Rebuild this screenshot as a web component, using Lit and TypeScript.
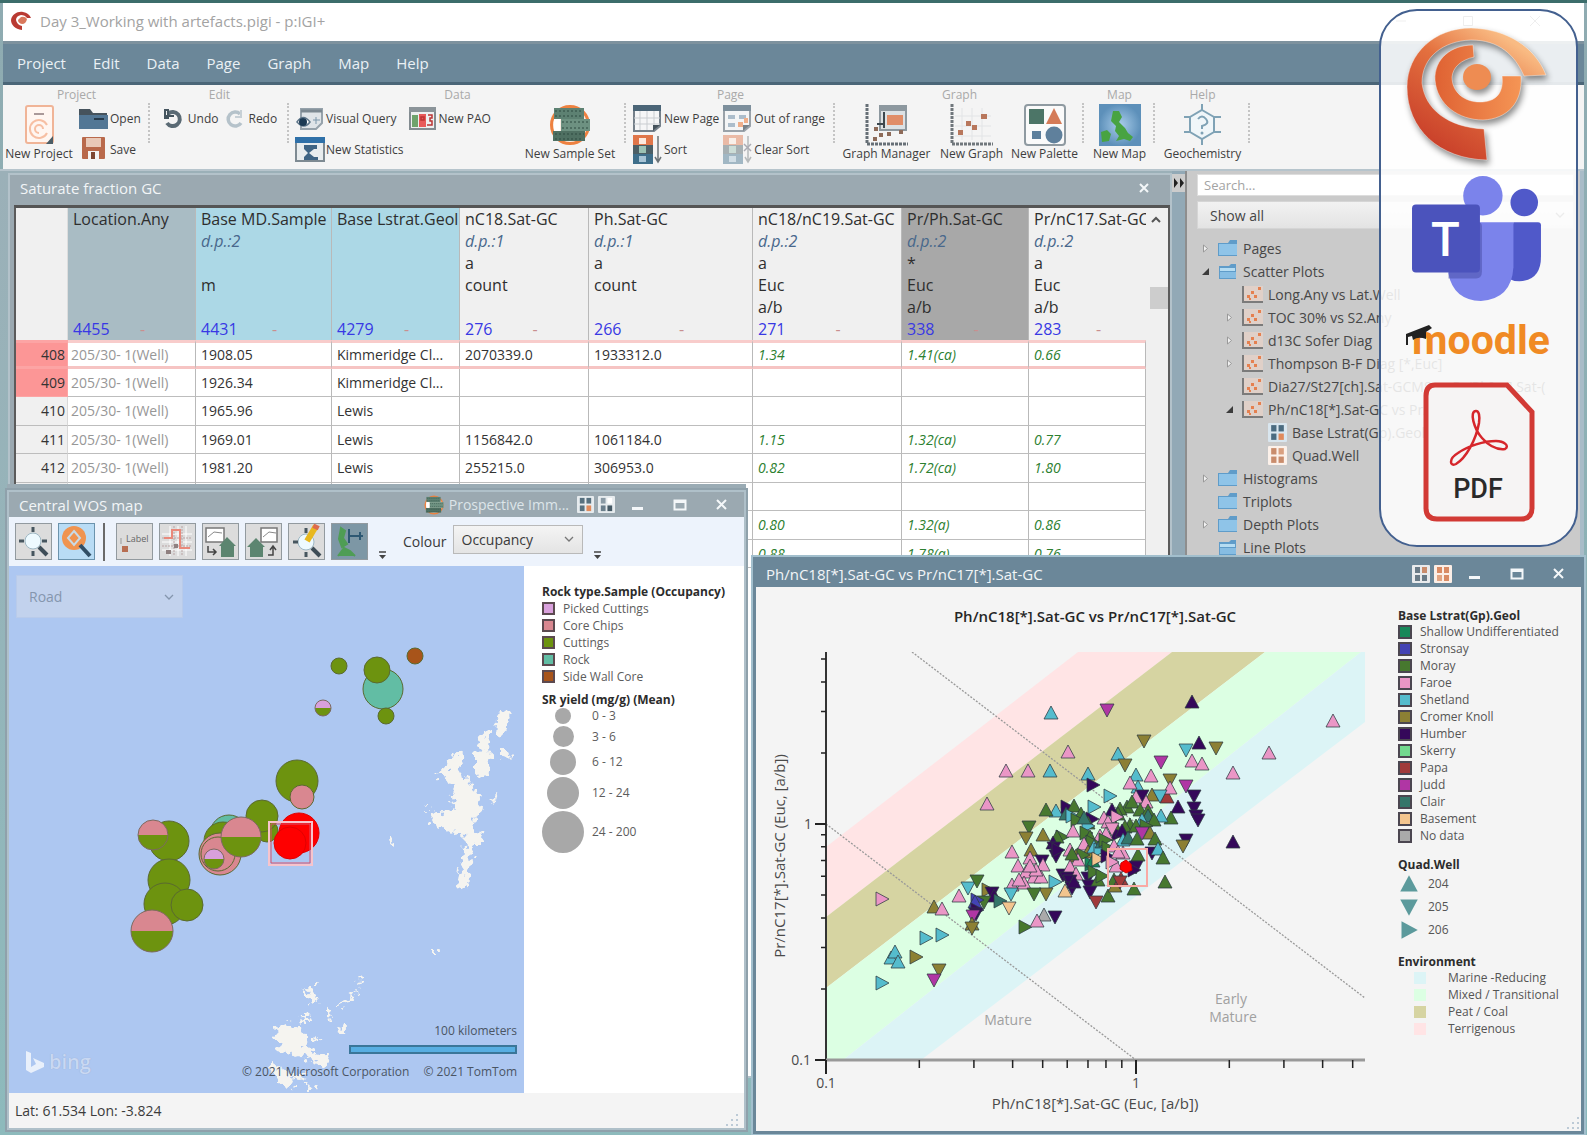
import { LitElement, html, svg, css, nothing } from "lit";
import { customElement, property } from "lit/decorators.js";
import { classMap } from "lit/directives/class-map.js";
import { styleMap } from "lit/directives/style-map.js";

/* ---------- shared styles ---------- */

const base = css`
  *, *::before, *::after { box-sizing: border-box; }
  button, select, input {
    font: inherit; color: inherit; margin: 0; padding: 0;
    border: 0; background: none; border-radius: 0; appearance: none; outline: 0;
  }
  svg { display: block; flex: none; }
  h1, h2, h3, ul { margin: 0; padding: 0; font: inherit; list-style: none; }
  .picker { display: grid; align-items: center; }
  .picker > * { grid-area: 1 / 1; }
  .picker > svg { justify-self: end; margin-right: 8px; pointer-events: none; }
  .picker select { width: 100%; height: 100%; }
`;

const frame = css`
  .caption {
    display: flex; align-items: center; gap: 4px; flex: none;
    height: 25px; padding: 0 3px 0 10px; background: #9ba9b1; color: #f2f5f7;
    font-size: 15px; line-height: 20px;
  }
  .caption h2 { flex: 1; white-space: nowrap; }
  .caption .win { width: 38px; height: 20px; display: grid; place-items: center; }
`;

/* ---------- icons ---------- */

const chevron = (c = "#777") => html`<svg width="10" height="6" viewBox="0 0 10 6"><path d="M1 1l4 4 4-4" fill="none" stroke=${c} stroke-width="1.3"/></svg>`;
const minIcon = html`<svg width="14" height="14"><rect x="1" y="9" width="11" height="3" fill="#f4f7f9"/></svg>`;
const maxIcon = html`<svg width="14" height="14"><path d="M1.500 2.500h11v9h-11zM1 4h12" fill="none" stroke="#f4f7f9" stroke-width="2"/></svg>`;
const closeIcon = html`<svg width="14" height="14"><path d="M2 2l9 9M11 2l-9 9" stroke="#f4f7f9" stroke-width="2"/></svg>`;

const quad = (a: string, b: string, c: string, d: string, bg = "#e6ebee", size = 17) => html`
  <svg width=${size} height=${size} viewBox="0 0 18 18"><rect width="18" height="18" rx="1" fill=${bg}/>
  <rect x="3" y="2" width="5" height="6" fill=${a}/><rect x="10" y="2" width="5" height="6" fill=${b}/>
  <rect x="3" y="10" width="5" height="6" fill=${c}/><rect x="10" y="10" width="5" height="6" fill=${d}/></svg>`;

const sampleSet = (s: number) => html`
  <svg width=${s} height=${s} viewBox="0 0 42 42">
    <circle cx="21" cy="21" r="18.500" fill="#fbeee4" stroke="#ee8241" stroke-width="3"/>
    <rect x="5" y="4" width="30" height="11" fill="#5d8172"/><rect x="12" y="15" width="29" height="12" fill="#6d9181"/>
    <rect x="4" y="27" width="32" height="10" fill="#4f7062"/>
    <path d="M6 7h28M6 12h28M13 18h27M13 24h27M6 30h29M6 35h28" stroke="#2f4a40" stroke-dasharray="2 2"/>
    <rect x="5" y="15" width="6" height="12" fill="#fff"/>
  </svg>`;

const sortIcon = (faint = false) => html`
  <svg width="29" height="29" viewBox="0 0 29 29" opacity=${faint ? 0.45 : 1}>
    <rect x="0" width="20" height="10" fill="#e0764a"/><rect x="6" y="3" width="7" height="6" fill="#fde9dd"/>
    <rect y="10" width="20" height="9" fill="#4c5f66"/><rect x="6" y="11" width="7" height="7" fill="#9cc2b4"/>
    <rect y="19" width="20" height="10" fill="#3f6f8b"/><rect x="6" y="21" width="7" height="6" fill="#a7c4d6"/>
    <path d="M25 1v25M22 22l3 5 3-5" fill="none" stroke="#6c7478" stroke-width="1.500"/>
    ${faint ? svg`<path d="M21 9l7 7M28 9l-7 7" stroke="#556" stroke-width="1.500"/>` : nothing}
  </svg>`;

const pageIcon = (dots = false) => html`
  <svg width="29" height="27" viewBox="0 0 29 27" opacity=${dots ? 0.7 : 1}>
    <path d="M1 1h26v20l-6 5H1z" fill="#f5f6f7" stroke="#75808a" stroke-width="2"/><rect width="28" height="6" fill="#4b6577"/>
    ${dots
      ? svg`<path d="M5 10h7v4H5zM16 10h7v4h-7zM5 18h7v4H5z" fill="#8fa6bb"/><path d="M15 17h5v5h-5zM21 13h4v5h-4z" fill="#ee9360"/>`
      : svg`<path d="M7 6v19M14 6v19M21 6v19M1 13h26M1 19h26" stroke="#c9cdd1"/>`}
    <path d="M20 26v-6h7z" fill="#44525c"/>
  </svg>`;

const icons: Record<string, unknown> = {
  newProject: html`<svg width="29" height="40" viewBox="0 0 29 40"><rect x="1" y="1" width="27" height="37" rx="2" fill="#fff6f1" stroke="#f0b497" stroke-width="2"/><path d="M9 9h10" stroke="#a99" stroke-width="2"/><path d="M22 20a9 9 0 1 0 0 8M18 24a4 4 0 1 0-4 4" fill="none" stroke="#f7bfa3" stroke-width="2"/><path d="M28 39h-7l7-8z" fill="#4b5d66"/></svg>`,
  open: html`<svg width="29" height="20" viewBox="0 0 29 20"><path d="M0 0h11l3 4h14v4H0z" fill="#46535d"/><rect y="6" width="29" height="14" fill="#537795"/><rect x="15" y="9" width="10" height="2" fill="#26394a"/></svg>`,
  save: html`<svg width="23" height="24" viewBox="0 0 23 24"><rect width="23" height="22" rx="1" fill="#b9694b"/><rect x="4" y="1" width="15" height="9" fill="#e9c9b8"/><rect x="6" y="14" width="11" height="10" fill="#f4f4f4"/><rect x="9" y="15" width="4" height="7" fill="#7e4632"/></svg>`,
  undo: html`<svg width="19" height="20" viewBox="0 0 19 20"><path d="M4 5a7 7 0 1 1-1 9" fill="none" stroke="#5a6a74" stroke-width="4"/><path d="M1 1h3v8H1zM1 7h9" stroke="#44545e" stroke-width="2" fill="none"/></svg>`,
  redo: html`<svg width="19" height="20" viewBox="0 0 19 20"><path d="M15 5a7 7 0 1 0 1 9" fill="none" stroke="#b5c2ca" stroke-width="3.500"/><path d="M16 1v7h-6" stroke="#c7d0d6" stroke-width="2" fill="none"/></svg>`,
  query: html`<svg width="28" height="22" viewBox="0 0 28 22"><path d="M5 1h21v14l-6 6H5z" fill="#dfe4e8" stroke="#96a2ab" stroke-width="2"/><path d="M5 3h21" stroke="#7b8891" stroke-width="3"/><path d="M1 14q6-9 13 0q-6 8-13 0z" fill="#fff" stroke="#5c7488" stroke-width="1.500"/><circle cx="7" cy="14" r="4" fill="#1c3a54"/><path d="M20 9v7M17 12h7" stroke="#7c97ab"/></svg>`,
  pao: html`<svg width="27" height="23" viewBox="0 0 27 23"><rect x="1" y="1" width="25" height="21" fill="#eef0f0" stroke="#838c91" stroke-width="2"/><rect width="27" height="5" fill="#8b9499"/><rect x="3" y="8" width="6" height="12" fill="#6fa36c"/><rect x="10" y="7" width="7" height="13" fill="#e85a5a"/><path d="M12 10h3v3h-3zM19 8h4v3h-2v3h2v4h-5" fill="none" stroke="#b33" stroke-width="1.500"/></svg>`,
  stats: html`<svg width="30" height="25" viewBox="0 0 30 25"><rect x="1" y="1" width="28" height="23" fill="#e8ecee" stroke="#7e8a92" stroke-width="2"/><rect width="30" height="6" fill="#2f70a8"/><path d="M9 8h13v4h-3l-5 4 5 4h4v3H9v-3l4-4-4-4z" fill="#3f6484"/></svg>`,
  sampleSet: sampleSet(42),
  newPage: pageIcon(),
  outRange: pageIcon(true),
  sort: sortIcon(),
  clearSort: sortIcon(true),
  graphManager: html`<svg width="43" height="42" viewBox="0 0 43 42"><path d="M2 0v40h41" fill="none" stroke="#666f76" stroke-width="3" stroke-dasharray="3 1"/><rect x="15" y="2" width="26" height="24" fill="#dce1e4" stroke="#8d989f" stroke-width="2"/><rect x="15" y="2" width="26" height="5" fill="#8d989f"/><rect x="22" y="11" width="16" height="10" fill="#e08d68"/><path d="M19 8v16M12 20h8" stroke="#3c474e" stroke-width="2"/><path d="M9 23h4v4H9zM14 29h4v4h-4zM8 33h4v4H8zM22 28h4v4h-4zM34 26h4v4h-4z" fill="#8d6a58"/></svg>`,
  newGraph: html`<svg width="43" height="42" viewBox="0 0 43 42"><path d="M2 0v40h41" fill="none" stroke="#70777c" stroke-width="3" stroke-dasharray="3 1"/><path d="M12 4v32M22 4v32M32 4v32M5 12h36M5 22h36M5 32h36" stroke="#e2e4e6"/><path d="M16 17h5v5h-5zM22 21h5v5h-5zM31 10h6v5h-6zM8 26h5v5H8z" fill="#b8775c"/></svg>`,
  palette: html`<svg width="42" height="42" viewBox="0 0 42 42"><rect x="1" y="1" width="40" height="40" rx="3" fill="#fafafa" stroke="#8f9aa1" stroke-width="2"/><rect x="5" y="5" width="15" height="15" fill="#4c7567"/><path d="M30 4l8 16H22z" fill="#d47b58"/><path d="M8 27h9v8H8z" fill="#5d7f9c"/><circle cx="30" cy="31" r="8.500" fill="#5f809c"/></svg>`,
  newMap: html`<svg width="42" height="42" viewBox="0 0 42 42"><defs><radialGradient id="sea"><stop offset="0" stop-color="#a9cdea"/><stop offset="1" stop-color="#5d90ba"/></radialGradient></defs><rect width="42" height="42" fill="url(#sea)"/><path d="M14 7l6 0 3 6-3 5 6 6 3 5 5 4-3 4-6-2-8 2 3-5-4-5 1-5-5-5zM2 28l6-2 4 4-2 7-7 1z" fill="#48a342"/></svg>`,
  geochem: html`<svg width="39" height="42" viewBox="0 0 39 42"><g fill="none" stroke="#7fa2b5" stroke-width="2"><path d="M19 6l12 7v15l-12 7-12-7V13z" fill="#f0f6f9"/><path d="M19 0v6M19 35v6M7 13l-6 0M7 28H1M31 13h7M31 28h7"/><path d="M15 15q4-5 8 0t-4 7v3"/></g><circle cx="19" cy="29" r="1.500" fill="#7fa2b5"/></svg>`,
};

/* ---------- ribbon ---------- */

interface Tool { icon: string; label: string; }
interface Column { big?: boolean; tools: Tool[]; wide?: number; }
interface Group { name: string; width: number; columns: Column[]; }

const groups: Group[] = [
  { name: "Project", width: 147, columns: [
    { big: true, wide: 72, tools: [{ icon: "newProject", label: "New Project" }] },
    { tools: [{ icon: "open", label: "Open" }, { icon: "save", label: "Save" }] } ] },
  { name: "Edit", width: 139, columns: [
    { tools: [{ icon: "undo", label: "Undo" }] }, { tools: [{ icon: "redo", label: "Redo" }] } ] },
  { name: "Data", width: 337, columns: [
    { tools: [{ icon: "query", label: "Visual Query" }, { icon: "stats", label: "New Statistics" }] },
    { tools: [{ icon: "pao", label: "New PAO" }] },
    { big: true, wide: 108, tools: [{ icon: "sampleSet", label: "New Sample Set" }] } ] },
  { name: "Page", width: 209, columns: [
    { tools: [{ icon: "newPage", label: "New Page" }, { icon: "sort", label: "Sort" }] },
    { tools: [{ icon: "outRange", label: "Out of range" }, { icon: "clearSort", label: "Clear Sort" }] } ] },
  { name: "Graph", width: 249, columns: [
    { big: true, wide: 96, tools: [{ icon: "graphManager", label: "Graph Manager" }] },
    { big: true, wide: 74, tools: [{ icon: "newGraph", label: "New Graph" }] },
    { big: true, wide: 72, tools: [{ icon: "palette", label: "New Palette" }] } ] },
  { name: "Map", width: 71, columns: [{ big: true, wide: 64, tools: [{ icon: "newMap", label: "New Map" }] }] },
  { name: "Help", width: 95, columns: [{ big: true, wide: 90, tools: [{ icon: "geochem", label: "Geochemistry" }] }] },
];

@customElement("tool-ribbon")
class ToolRibbon extends LitElement {
  static styles = [base, css`
    :host { display: flex; height: 84px; background: #f4f4f4; font-size: 12px; color: #3e3e3e; }
    .group { position: relative; display: flex; flex-direction: column; flex: none; }
    .group::after { content: ""; position: absolute; right: 0; top: 18px; height: 40px; border-right: 2px dotted #c4c4c4; }
    h3 { text-align: center; color: #a9a9a9; line-height: 16px; padding-top: 2px; }
    .tools { display: flex; justify-content: center; flex: 1; }
    .column { display: grid; grid-template-rows: 31px 30px; align-items: center; }
    .small { display: flex; align-items: center; gap: 2px; height: 30px; white-space: nowrap; text-align: left; }
    .slot { width: 29px; display: grid; place-items: center; }
    .edit .column + .column { margin-left: 4px; }
    .edit .slot { width: 24px; }
    .column + .column { margin-left: 4px; }
    .project .tools { justify-content: flex-start; }
    .project .column { margin-left: 4px; }
    .data .tools { justify-content: flex-start; padding: 0 2px 0 6px; }
    .data .big { margin-left: auto; }
    .page .tools { justify-content: flex-start; padding-left: 7px; }
    .big { display: flex; flex-direction: column; align-items: center; height: 61px; white-space: nowrap; }
    .big .pic { height: 43px; display: grid; place-items: center; }
    .big span { line-height: 16px; }
  `];
  render() {
    return groups.map((g) => html`
      <section class="group ${g.name.toLowerCase()}" style=${styleMap({ width: `${g.width}px` })}>
        <h3>${g.name}</h3>
        <div class="tools">
          ${g.columns.map((c) => c.big
            ? html`<button class="big" style=${styleMap({ width: `${c.wide}px` })}><div class="pic">${icons[c.tools[0].icon]}</div><span>${c.tools[0].label}</span></button>`
            : html`<div class="column">${c.tools.map((t) => html`<button class="small"><div class="slot">${icons[t.icon]}</div>${t.label}</button>`)}</div>`)}
        </div>
      </section>`);
  }
}

/* ---------- sample table ---------- */

interface Col { name: string; lines: string[]; count: string; tone?: string; width?: number; }

const columns: Col[] = [
  { name: "Location.Any", lines: ["", "", "", ""], count: "4455", tone: "slate", width: 128 },
  { name: "Base MD.Sample", lines: ["d.p.:2", "", "m", ""], count: "4431", tone: "sky", width: 136 },
  { name: "Base Lstrat.Geol", lines: ["", "", "", ""], count: "4279", tone: "sky", width: 128 },
  { name: "nC18.Sat-GC", lines: ["d.p.:1", "a", "count", ""], count: "276", width: 129 },
  { name: "Ph.Sat-GC", lines: ["d.p.:1", "a", "count", ""], count: "266", width: 164 },
  { name: "nC18/nC19.Sat-GC", lines: ["d.p.:2", "a", "Euc", "a/b"], count: "271", width: 149 },
  { name: "Pr/Ph.Sat-GC", lines: ["d.p.:2", "*", "Euc", "a/b"], count: "338", tone: "dark", width: 127 },
  { name: "Pr/nC17.Sat-GC", lines: ["d.p.:2", "a", "Euc", "a/b"], count: "283" },
];

const well = "205/30- 1(Well)";
const rows: string[][] = [
  ["408", well, "1908.05", "Kimmeridge Cl...", "2070339.0", "1933312.0", "1.34", "1.41(ca)", "0.66"],
  ["409", well, "1926.34", "Kimmeridge Cl...", "", "", "", "", ""],
  ["410", well, "1965.96", "Lewis", "", "", "", "", ""],
  ["411", well, "1969.01", "Lewis", "1156842.0", "1061184.0", "1.15", "1.32(ca)", "0.77"],
  ["412", well, "1981.20", "Lewis", "255215.0", "306953.0", "0.82", "1.72(ca)", "1.80"],
  ["", "", "", "", "", "", "", "", ""],
  ["", "", "", "", "", "", "0.80", "1.32(a)", "0.86"],
  ["", "", "", "", "", "", "0.88", "1.78(a)", "0.76"],
];

@customElement("sample-window")
class SampleWindow extends LitElement {
  static styles = [base, frame, css`
    :host { display: flex; flex-direction: column; border: 2px solid #b3c2ca; background: #9ba9b1; overflow: hidden; }
    .caption { height: 30px; padding: 0 20px 4px 10px; }
    .body { display: flex; flex: 1; min-height: 0; margin: 0 0 0 4px; border: 2px solid #5b5b5b; border-top: 3px solid #555; border-bottom: 0; background: #fff; overflow: hidden; }
    .scroll { flex: 1; min-width: 0; overflow: hidden; }
    table { width: 100%; table-layout: fixed; border-collapse: separate; border-spacing: 0; }
    th, td { padding: 0; text-align: left; font-weight: 400; white-space: nowrap; overflow: hidden; }
    thead th { height: 132px; vertical-align: top; background: #f0f0f0; border-right: 1px solid #b9b9b9; font-size: 16px; line-height: 22px; color: #2e2e2e; padding-left: 5px; }
    thead th:last-child { border-right: 0; }
    thead div { height: 22px; }
    thead .corner { border-right-color: #ddd; }
    thead .slate { background: #a9bcc4; }
    thead .sky { background: #acd8e6; }
    thead .dark { background: #a8a8a8; }
    .dp { color: #49688c; font-style: italic; }
    .count { display: grid; grid-template-columns: 1fr 1fr; color: #3838e4; }
    .count i { color: #c98f8f; font-style: normal; padding-left: 6px; }
    tbody td, tbody th { height: 28px; border-right: 1px solid #b9b9b9; border-bottom: 1px solid #bdbdbd; font-size: 14px; line-height: 20px; color: #333; padding-left: 5px; }
    tbody tr:nth-child(odd) > * { height: 29px; }
    tbody th { background: #f0f0f0; text-align: right; padding: 0 2px 0 0; border-right-color: #d8d8d8; }
    tbody td:nth-child(2) { color: #979797; padding-left: 3px; }
    tbody td:nth-child(n + 7) { color: #2c8030; font-style: italic; }
    tbody tr.current > * { border-top: 3px solid #f8cccb; border-bottom: 3px solid #f6c4c3; }
    tbody tr.marked th { background: #fc9696; border-color: #fca4a4; }
    .bar { width: 22px; flex: none; background: #f0f0f0; display: flex; flex-direction: column; align-items: center; }
    .bar svg { margin: 8px 2px 0 0; }
    .bar i { width: 18px; height: 22px; margin: 64px 0 0 4px; background: #cdcdcd; }
  `];
  render() {
    return html`
      <header class="caption"><h2>Saturate fraction GC</h2><button aria-label="Close"><svg width="12" height="12"><path d="M2 2l8 8M10 2l-8 8" stroke="#f4f7f9" stroke-width="2"/></svg></button></header>
      <div class="body">
        <div class="scroll">
          <table>
            <colgroup><col style="width:52px">${columns.map((c) => c.width ? html`<col style=${styleMap({ width: `${c.width}px` })}>` : html`<col>`)}</colgroup>
            <thead><tr><th class="corner"></th>
              ${columns.map((c) => html`<th class=${c.tone ?? ""}><div>${c.name}</div>
                ${c.lines.map((l, i) => html`<div class=${classMap({ dp: i === 0 })}>${l}</div>`)}
                <div class="count"><span>${c.count}</span><i>-</i></div></th>`)}
            </tr></thead>
            <tbody>${rows.map((r, i) => html`<tr class=${classMap({ current: i === 0, marked: i < 2 })}>
              <th scope="row">${r[0]}</th>${r.slice(1).map((v) => html`<td>${v}</td>`)}</tr>`)}</tbody>
          </table>
        </div>
        <div class="bar"><svg width="10" height="7"><path d="M1 6l4-4 4 4" fill="none" stroke="#555" stroke-width="2"/></svg><i></i></div>
      </div>`;
  }
}

/* ---------- project tree ---------- */

interface Node { depth: number; icon: "folder" | "open" | "plot" | "colour" | "shape"; text: string; arrow?: "closed" | "open"; }

const nodes: Node[] = [
  { depth: 0, icon: "folder", text: "Pages", arrow: "closed" },
  { depth: 0, icon: "open", text: "Scatter Plots", arrow: "open" },
  { depth: 1, icon: "plot", text: "Long.Any vs Lat.Well" },
  { depth: 1, icon: "plot", text: "TOC 30% vs S2.Any", arrow: "closed" },
  { depth: 1, icon: "plot", text: "d13C Sofer Diag", arrow: "closed" },
  { depth: 1, icon: "plot", text: "Thompson B-F Diag [*,Euc]", arrow: "closed" },
  { depth: 1, icon: "plot", text: "Dia27/St27[ch].Sat-GCMS vs Pr/Ph[ca].Sat-(" },
  { depth: 1, icon: "plot", text: "Ph/nC18[*].Sat-GC vs Pr/nC17[*].Sat-GC", arrow: "open" },
  { depth: 2, icon: "colour", text: "Base Lstrat(Gp).Geol" },
  { depth: 2, icon: "shape", text: "Quad.Well" },
  { depth: 0, icon: "folder", text: "Histograms", arrow: "closed" },
  { depth: 0, icon: "folder", text: "Triplots" },
  { depth: 0, icon: "folder", text: "Depth Plots", arrow: "closed" },
  { depth: 0, icon: "open", text: "Line Plots" },
];

const treeIcons = {
  folder: html`<svg width="20" height="18" viewBox="0 0 20 18"><path d="M0 3h10l2-3h7v16H0z" fill="#5f9cc9"/><path d="M1 4h18v11H1z" fill="#8fc4e8"/></svg>`,
  open: html`<svg width="20" height="18" viewBox="0 0 20 18"><path d="M1 3h10l2-2h5v15H1z" fill="#5f9cc9"/><path d="M2 5h15v3H2z" fill="#b5dcf2"/><path d="M2 9h16v6H2z" fill="#86bde3"/></svg>`,
  plot: html`<svg width="21" height="18" viewBox="0 0 21 18"><rect x="2" width="19" height="16" fill="#e0d0c8"/><path d="M1 0v16h20" fill="none" stroke="#7b7b7b" stroke-width="2"/><path d="M5 9h3v3H5zM9 5h3v3H9zM12 9h3v3h-3zM16 1h3v3h-3zM7 12h2v2H7z" fill="#e5804f"/></svg>`,
  colour: quad("#4b6b80", "#4b6b80", "#4b6b80", "#e08a5c", "#d9e6ef", 19),
  shape: quad("#c98c6c", "#d9a080", "#c98c6c", "#c98c6c", "#fcf1ea", 19),
};

@customElement("project-tree")
class ProjectTree extends LitElement {
  static styles = [base, css`
    :host { display: flex; flex-direction: column; padding: 3px 6px 0 10px; background: #cacaca; border-left: 2px solid #8e8e8e; border-right: 4px solid #a9bcc8; overflow: hidden; }
    .search { height: 22px; padding: 0 6px; background: #fff; border: 1px solid #ddd; font-size: 13px; }
    .search::placeholder { color: #a3a3a3; }
    .picker { height: 28px; margin: 5px 0 8px; background: linear-gradient(#f2f2f2, #e3e3e3); border: 1px solid #d5d5d5; font-size: 14px; }
    .picker select { padding-left: 12px; color: #444; }
    li { display: flex; align-items: center; gap: 5px; height: 23px; font-size: 14px; line-height: 20px; color: #474747; white-space: nowrap; overflow: hidden; margin-right: 6px; }
    .arrow { width: 16px; flex: none; display: grid; place-items: center; }
    .d1 { padding-left: 24px; }
    .d2 { padding-left: 50px; }
  `];
  render() {
    return html`
      <input class="search" type="text" placeholder="Search..." aria-label="Search">
      <div class="picker"><select aria-label="Filter"><option>Show all</option></select>${chevron()}</div>
      <ul>${nodes.map((n) => html`<li class="d${n.depth}">
        <span class="arrow">${n.arrow === "open"
          ? html`<svg width="9" height="9"><path d="M8 1v7H1z" fill="#3b3b3b"/></svg>`
          : n.arrow ? html`<svg width="7" height="9"><path d="M1.500 1v7l4-3.500z" fill="#f2f2f2" stroke="#999"/></svg>` : nothing}</span>
        ${treeIcons[n.icon]}<span>${n.text}</span></li>`)}</ul>`;
  }
}

/* ---------- map window ---------- */

const cut = { violet: "#d9a0dc", pink: "#d98790", green: "#6d930f", teal: "#62bda4", brown: "#a8541a", red: "#fe0000" };
type Cut = keyof typeof cut;
const wells: [number, number, number, Cut, Cut?][] = [
  [330, 100, 8, "green"], [374, 123, 20, "teal"], [368, 104, 13, "green"], [377, 150, 8, "green"], [406, 90, 8, "brown"],
  [314, 142, 8, "violet", "green"], [288, 215, 21, "green"], [293, 231, 12, "pink"],
  [258, 265, 11, "green"], [253, 250, 16, "green"],
  [160, 275, 20, "green"], [144, 269, 15, "pink", "green"], [160, 314, 21, "green"], [156, 338, 21, "green"], [178, 339, 16, "green"],
  [143, 365, 21, "pink", "green"],
  [220, 268, 19, "teal"], [214, 275, 19, "green"], [211, 288, 21, "pink"], [209, 288, 17, "pink"], [205, 293, 10, "violet", "green"],
  [232, 271, 20, "pink", "green"],
  [290, 267, 20, "red"], [281, 277, 16, "red"],
];

const land = [
  "M491 145l11 1-2 7-2 8-7 12-4-5 1-14z", "M476 164l5 5-1 9 1 9-3 21-10 1-3-10 0-13 5-5 2-9z", "M490 184l6 0 7 5-5 5-7-4z",
  "M452 183l2 10-3 11 3 11 5-5 4 12 10 6-4 9 6 7-9 8-2 12 12 6-2 7-8 0-3 11-4 19-2 15-9-2 3-18 5-18-1-19-14 3-7-6-12-6-3-12 18 3 10-4-6-9 6-13-5-6-15-6 10-9 9-15z",
  "M485 231l6-3-4 7-5 3zM380 272l4 0 1 5-4 1zM423 384l5 0-1 5-4 0zM415 237l4 3-2 1z",
  "M267 461l11-5 11 5 8 10-5 10 13 4 5 5 8-3 5 8-8 5-8-1-6-9-14 2-10-7-8 2-1-11z",
  "M289 450l9 0 3-2 1 7-5 0-3 3zM294 424l5-1 4 5 9 9-8-4-3 3-3-5zM306 416l4 0-1 5-3 0zM318 440l4 3-1 6 2 4-5-1zM327 441l7-8 8-3 9-6-3 5-10 6-8 6zM349 413l5-2-2 6-4 2zM329 461l5-2 5 6-3 1-6 1zM304 473l9-1-3 5-6-1z",
  "M261 498l9 3 10 5 9 2 9-2-4 7-12-2 3 8-6 5-8-7-5-9-6-4zM297 518l8 3-2 6h-6z",
];

const tools = [
  svg`<circle cx="17" cy="17" r="8" fill="#eefaff" stroke="#9fb8c4"/><path d="M17 3v5M17 27v5M3 17h5M26 17h5" stroke="#47565f" stroke-width="3"/><path d="M23 23l8 8" stroke="#3e4d57" stroke-width="4"/>`,
  svg`<circle cx="15" cy="14" r="12" fill="#f09450"/><path d="M15 7l6 7-6 7-6-7z" fill="none" stroke="#c9dbe6" stroke-width="2"/><path d="M21 21l10 11" stroke="#314e66" stroke-width="4"/>`,
  svg`<rect x="5" y="22" width="6" height="6" fill="#b86e52"/><path d="M4 14v6" stroke="#999"/><text x="9" y="18" font-size="9" fill="#666">Label</text>`,
  svg`<path d="M2 10h30M2 18h30M2 26h30M10 2v30M18 2v30M26 2v30" stroke="#fff"/><path d="M2 14h30M2 22h30M14 2v30M22 2v30" stroke="#b9a4a4" stroke-dasharray="2 1"/><path d="M4 14h8V6h8v18h10" fill="none" stroke="#e9897b" stroke-width="2"/><path d="M6 26h5v4H6zM14 20h4v4h-4z" fill="#8f8080"/>`,
  svg`<rect x="3" y="4" width="18" height="14" fill="#fff" stroke="#777" stroke-width="1.500"/><path d="M5 13l6-5 8 1" fill="none" stroke="#8a8a8a"/><path d="M24 13l9 9h-2v11H18V22h-2z" fill="#5c8570"/><path d="M5 22v6h8M10 25l3 3-3 3" fill="none" stroke="#444" stroke-width="1.500"/>`,
  svg`<rect x="15" y="4" width="16" height="14" fill="#fff" stroke="#777" stroke-width="1.500"/><path d="M17 13l6-5 7 1" fill="none" stroke="#8a8a8a"/><path d="M10 14l9 9h-2v10H4V23H1z" fill="#5c8570"/><path d="M22 31h5v-8M24 26l3-4 3 4" fill="none" stroke="#444" stroke-width="1.500"/>`,
  svg`<circle cx="17" cy="18" r="8" fill="#eefaff" stroke="#9fb8c4"/><path d="M17 4v5M4 18h5M17 28v5" stroke="#47565f" stroke-width="3"/><path d="M23 24l8 8" stroke="#3e4d57" stroke-width="4"/><path d="M27 2l-9 15" stroke="#e8b81e" stroke-width="6"/><path d="M28 1l-2 4" stroke="#dd6a4e" stroke-width="6"/>`,
  svg`<rect width="35" height="35" fill="#7d97a5"/><path d="M9 4l4 3-2 7 4 6-5 3-3-8zM6 32l6-8 6 3 5 5" fill="#4f9d55" stroke="#4f9d55" stroke-width="2"/><path d="M17 5v14M17 12h14M28 8v8" stroke="#2d5873" stroke-width="2"/>`,
];

const split = (x: number, y: number, r: number, a: string, b: string) => svg`
  <path d="M${x - r} ${y}a${r} ${r} 0 0 1 ${2 * r} 0z" fill=${a}/><path d="M${x - r} ${y}a${r} ${r} 0 0 0 ${2 * r} 0z" fill=${b}/>
  <circle cx=${x} cy=${y} r=${r} fill="none" stroke="#7c6a60" stroke-width="1"/>`;

@customElement("map-window")
class MapWindow extends LitElement {
  static styles = [base, frame, css`
    :host { display: flex; flex-direction: column; background: #f4f4f4; border: 2px solid #afc0c9; outline: 2px solid #8fa1ab; box-shadow: 0 -6px 0 #9aabb4; overflow: hidden; }
    .set { display: flex; align-items: center; gap: 5px; color: #dde5e9; margin-right: 4px; font-size: 14px; white-space: nowrap; }
    .bar { display: flex; align-items: center; gap: 6px; height: 49px; padding: 0 6px; background: #edf3fc; font-size: 14px; flex: none; color: #3a3a3a; }
    .tool { width: 37px; height: 37px; border: 1px solid #929a9f; background: #dcdcdc; display: grid; place-items: center; }
    .tool.on { background: #b9dcf5; border-color: #6b93ad; }
    .rule { width: 2px; height: 38px; background: #6a6a6a; margin: 0 5px 0 2px; }
    .more { align-self: flex-end; margin: 0 4px 6px; }
    .bar label { margin-left: 6px; }
    .bar .picker { width: 130px; height: 29px; margin-top: -5px; background: linear-gradient(#f4f4f4, #e4e4e4); border: 1px solid #b9b9b9; }
    .picker select { padding-left: 8px; }
    .main { display: flex; flex: 1; min-height: 0; }
    .map { position: relative; flex: none; width: 515px; background: #adc7f1; overflow: hidden; }
    .road { position: absolute; left: 7px; top: 9px; width: 167px; height: 43px; background: #c2d2ed; border: 1px solid #b9cbea; font-size: 14px; color: #8596ae; }
    .road select { padding-left: 12px; }
    .credit { position: absolute; right: 7px; bottom: 12px; display: flex; flex-direction: column; align-items: flex-end; gap: 5px; font-size: 12px; line-height: 18px; color: #4a5564; }
    .scale { width: 168px; height: 9px; background: #57aee2; border: 2px solid #3a7699; }
    .credit p { margin: 0; display: flex; gap: 14px; white-space: nowrap; }
    .credit .scale { margin-bottom: 4px; }
    .bing { position: absolute; left: 16px; bottom: 18px; display: flex; align-items: center; gap: 4px; color: #c9d8f2; font-size: 20px; line-height: 26px; font-weight: 600; text-shadow: 0 0 1px #8fa6cc; }
    .legend { flex: 1; background: #fff; padding: 17px 0 0 18px; font-size: 12px; line-height: 17px; color: #5c5c5c; white-space: nowrap; }
    h3 { font-weight: 700; color: #2c2c2c; font-size: 12px; }
    .legend li { display: flex; align-items: center; gap: 8px; height: 17px; }
    .swatch { width: 13px; height: 13px; border: 2px solid #5c4a50; }
    ul + h3 { margin-top: 6px; }
    .sizes li { height: auto; gap: 8px; padding-bottom: 2px; line-height: 16px; }
    .ball { width: 42px; display: grid; place-items: center; }
    .ball i { display: block; border-radius: 50%; background: #a8a8a8; }
    .status { height: 35px; flex: none; display: flex; align-items: center; justify-content: space-between; padding: 0 4px 0 6px; font-size: 14px; color: #3c3c3c; }
    .status svg { align-self: flex-end; }
  `];
  render() {
    const more = html`<svg class="more" width="9" height="9"><path d="M1 1h7" stroke="#444" stroke-width="1.500"/><path d="M1 4h7L4.500 8z" fill="#444"/></svg>`;
    const rock: [Cut, string][] = [["violet", "Picked Cuttings"], ["pink", "Core Chips"], ["green", "Cuttings"], ["teal", "Rock"], ["brown", "Side Wall Core"]];
    const sizes: [number, string][] = [[16, "0 - 3"], [21, "3 - 6"], [26, "6 - 12"], [32, "12 - 24"], [42, "24 - 200"]];
    return html`
      <header class="caption"><h2>Central WOS map</h2>
        <span class="set">${sampleSet(20)}Prospective Imm...</span>
        ${quad("#56707f", "#56707f", "#56707f", "#e08a5c")}${quad("#8a9aa5", "#fff", "#6b7f8c", "#455965")}
        <button class="win" aria-label="Minimise">${minIcon}</button><button class="win" aria-label="Maximise">${maxIcon}</button><button class="win" aria-label="Close">${closeIcon}</button>
      </header>
      <div class="bar">
        ${tools.map((t, i) => html`${i === 2 ? html`<i class="rule"></i>` : nothing}
          <button class=${classMap({ tool: true, on: i === 1 })} aria-label="Map tool ${i + 1}"><svg width="35" height="35" viewBox="0 0 35 35">${t}</svg></button>`)}
        ${more}<label for="colour">Colour</label>
        <div class="picker"><select id="colour"><option>Occupancy</option></select>${chevron()}</div>${more}
      </div>
      <div class="main">
        <div class="map">
          <svg width="515" height="527" viewBox="0 0 515 527">
            <defs><filter id="coast"><feTurbulence type="fractalNoise" baseFrequency=".16" numOctaves="2" seed="4" result="n"/><feDisplacementMap in="SourceGraphic" in2="n" scale="16" xChannelSelector="R" yChannelSelector="G"/></filter></defs>
            <g filter="url(#coast)" fill="#f5f4f0">${land.map((d) => svg`<path d=${d}/>`)}</g>
            ${wells.map(([x, y, r, a, b]) => b ? split(x, y, r, cut[a], cut[b])
              : svg`<circle cx=${x} cy=${y} r=${r} fill=${cut[a]} stroke=${a === "red" ? "#e00000" : "#5a6a30"} stroke-width="1"/>`)}
            <path d="M260 256h43v43h-43z" fill="none" stroke="#f7c4cc" stroke-width="2"/><path d="M262 258h39v39h-39z" fill="none" stroke="#d8506a"/>
          </svg>
          <div class="picker road"><select aria-label="Map style"><option>Road</option></select>${chevron("#8596ae")}</div>
          <div class="bing"><svg width="20" height="24" viewBox="0 0 20 24"><path d="M1 1l5 2v14l5-3-3-6 11 5v4L6 23l-5-3z" fill="#e9f0fb"/></svg>bing</div>
          <div class="credit"><span>100 kilometers</span><div class="scale"></div><p><span>© 2021 Microsoft Corporation</span><span>© 2021 TomTom</span></p></div>
        </div>
        <aside class="legend">
          <h3>Rock type.Sample (Occupancy)</h3>
          <ul>${rock.map(([c, t]) => html`<li><i class="swatch" style=${styleMap({ background: cut[c] })}></i>${t}</li>`)}</ul>
          <h3>SR yield (mg/g) (Mean)</h3>
          <ul class="sizes">${sizes.map(([s, t]) => html`<li><span class="ball"><i style=${styleMap({ width: `${s}px`, height: `${s}px` })}></i></span>${t}</li>`)}</ul>
        </aside>
      </div>
      <footer class="status"><span>Lat: 61.534 Lon: -3.824</span>${grip}</footer>`;
  }
}

const grip = html`<svg width="16" height="16"><path d="M13 2v2M13 7v2M13 12v2M8 7v2M8 12v2M3 12v2" stroke="#bccad6" stroke-width="2"/></svg>`;

/* ---------- scatter window ---------- */

const strata: Record<string, [string, string]> = {
  S: ["Shallow Undifferentiated", "#18885a"], T: ["Stronsay", "#4343b4"], M: ["Moray", "#47782f"], F: ["Faroe", "#ea96c6"],
  H: ["Shetland", "#55bccd"], C: ["Cromer Knoll", "#8c8034"], U: ["Humber", "#35085a"], K: ["Skerry", "#72d98e"],
  P: ["Papa", "#a03a3a"], J: ["Judd", "#b036a4"], L: ["Clair", "#35766a"], B: ["Basement", "#f3c58e"], N: ["No data", "#aaaaaa"],
};

/* Each mark: stratum letter, symbol (^ 204, v 205, > 206), x,y on the plot canvas. */
const marks = `
F^453,31 F^389,63 F>2,209 H>2,293 H^171,23 Jv227,20 U^312,12 Cv264,51 F^188,62 H^238,64 F^126,81 F^148,81 H^170,81 F^107,114
Hv306,60 U^319,53 Cv336,58 F^312,71 F^322,74 F^353,83 Jv281,72 Cv245,75 H^208,84 H^256,85 F^271,86 U>213,95 H^258,97 F^250,93
Cv290,90 P^287,107 F^290,98 Jv306,96 Uv314,106 Uv314,118 U^298,117 Uv316,126 Uv318,130 H>230,106 H>214,117 U>187,117 M^194,116
H^176,121 M^166,120 L^186,124 H>192,126 M^201,124 M>197,130 U>212,129 M^208,133 H>208,136 L^204,128 M^291,128 Uv262,106 F^256,107
C^272,105 Hv280,106 F^266,112 M^247,117 M^252,112 M^240,119 M^260,120 M^268,121 H^281,126 L^268,126 M^274,130 H^262,130 M^250,135
M^245,137 M^256,136 M>266,136 M^238,124 U^232,120 F^224,128 F>237,127 F^228,132 M^236,138 U>238,144 U^242,141 F^220,146 F^226,144
Fv232,139 H^243,150 L^248,148 Jv262,143 M^257,149 C^270,143 M^275,149 Mv149,137 Cv146,148 C^151,160 C^163,145 M>182,147 M^177,147
F^193,141 M>206,143 M^210,147 M>212,152 F^204,154 C^208,162 U^173,153 Uv174,158 Uv176,166 U>178,160 F^190,160 C^196,166 M>203,165
H^214,157 H>220,160 L^222,152 M>225,150 S>211,174 S^213,171 B>218,169 F^198,170 M^192,164 Uv162,171 M>228,158 U>227,166 F^234,156
F^243,163 F^238,162 M^258,165 Uv272,163 H^278,159 M^283,168 Uv306,150 Cv303,156 U^353,152 M^285,192 M^254,199 F^132,162 F^150,168
F^138,176 F^146,182 F^163,175 F^154,187 F^161,187 F^144,193 F^132,195 F^156,180 F^150,176 F^139,190 Uv183,185 F^190,177 F^196,184
H>175,192 B^185,201 Cv166,204 Mv154,204 Uv187,188 Uv190,191 Uv192,198 U^194,192 Uv208,188 Uv209,196 Uv210,202 M^218,190 M>214,182
M>222,186 M^228,206 Pv216,212 Uv256,177 U>254,180 F^236,176 F>232,172 C^235,196 M^234,190 P^241,189 Pv240,192 Hv88,198 Mv97,191
F^79,206 C>108,200 Uv112,203 U^114,206 L>120,211 Bv129,218 Hv131,204 Mv104,212 T>97,210 T^95,212 U>97,220 Uv96,224 Jv93,226
C^92,234 Cv92,238 C^54,217 F^62,219 N^164,225 M>145,237 F^157,231 Uv175,227 H>46,248 H>62,245 C>36,267 H^11,268 H^15,262
H^18,272 Cv59,280 Jv54,290`.trim().split(/\s+/).map((m) => {
  const [x, y] = m.slice(2).split(",").map(Number);
  return { key: m[0], sym: m[1], x, y };
});

const symbol = (s: string, x: number, y: number) =>
  s === "^" ? `M${x} ${y - 7}L${x + 7} ${y + 6}H${x - 7}Z` : s === "v" ? `M${x} ${y + 7}L${x + 7} ${y - 6}H${x - 7}Z` : `M${x + 7} ${y}L${x - 6} ${y - 7}V${y + 7}Z`;

const plot = { left: 70, top: 65, right: 609, bottom: 473, decadeX: 310, decadeY: 236 };
const logs = [1, 2, 3, 4, 5, 6, 7, 8, 9, 10, 20, 30, 40, 50];

@customElement("scatter-window")
class ScatterWindow extends LitElement {
  static styles = [base, frame, css`
    :host { display: flex; flex-direction: column; background: #f4f4f4; border: 3px solid #6a8799; outline: 2px solid #a2bfcd; overflow: hidden; }
    .caption { background: #6b8799; height: 27px; padding: 0 3px 0 10px; }
    .body { display: flex; flex: 1; min-height: 0; position: relative; }
    .chart { flex: 1; min-width: 0; overflow: hidden; }
    .axis { font-size: 15px; fill: #4a4a4a; }
    .tick, .zone { font-size: 14px; fill: #4a4a4a; }
    .title { font-size: 15px; font-weight: 600; fill: #262626; }
    .zone { fill: #a0a0a0; }
    .legend { flex: none; width: 183px; padding-top: 20px; font-size: 12px; line-height: 17px; color: #555; white-space: nowrap; }
    h3 { font-weight: 700; color: #2c2c2c; font-size: 12px; }
    li { display: flex; align-items: center; gap: 8px; height: 17px; }
    ul { padding-bottom: 12px; margin-top: -1px; }
    .swatch { width: 14px; height: 14px; border: 2px solid #4b4650; }
    .wells li { height: 23px; }
    .zones li { gap: 22px; padding-left: 16px; }
    .zones i { width: 12px; height: 12px; }
    .grip { position: absolute; right: 0; bottom: 0; }
  `];
  render() {
    const { left: l, top: t, right: r, bottom: b, decadeX, decadeY } = plot;
    const env: [string, string][] = [["Marine -Reducing", "#dcf4f6"], ["Mixed / Transitional", "#dcffe3"], ["Peat / Coal", "#d6d4a2"], ["Terrigenous", "#ffe4e5"]];
    const name = "Ph/nC18[*].Sat-GC vs Pr/nC17[*].Sat-GC";
    return html`
      <header class="caption"><h2>${name}</h2>
        ${quad("#6a7b87", "#c98c6c", "#6a7b87", "#6a7b87", "#e8eaec", 18)}${quad("#d98b64", "#d98b64", "#e3a582", "#d98b64", "#fbeee6", 18)}
        <button class="win" aria-label="Minimise">${minIcon}</button><button class="win" aria-label="Maximise">${maxIcon}</button><button class="win" aria-label="Close">${closeIcon}</button>
      </header>
      <div class="body">
        <div class="chart">
          <svg width="616" height="536" viewBox="0 0 616 536">
            <defs><clipPath id="area"><path d="M${l} ${t}H${r}V${b}H${l}z"/></clipPath></defs>
            <g clip-path="url(#area)">
              <path d="M70 260L322 65H416L70 330z" fill="#ffe4e5"/>
              <path d="M70 330L416 65H509L70 401z" fill="#d6d4a2"/>
              <path d="M70 401L509 65H605L87 473H70z" fill="#dcffe3"/>
              <path d="M87 473L605 65H609V135L165 473z" fill="#dcf4f6"/>
              <path d="M156 65L609 411M70 237L380 473" stroke="#999" stroke-width="1.300" stroke-dasharray="2 1.500"/>
            </g>
            <path d="M${l} ${t}V${b}" stroke="#333" stroke-width="2"/><path d="M${l} ${b}H${r}" stroke="#999" stroke-width="3"/>
            ${logs.map((v) => {
              const x = l + Math.log10(v) * decadeX, y = b - Math.log10(v) * decadeY, n = v === 1 || v === 10 ? 11 : 5;
              return svg`<path d="M${x} ${b}v${n + 3}M${l} ${y}h${-n}" stroke="#222" stroke-width=${n > 5 ? 2 : 1.5}/>`;
            })}
            <g transform="translate(124 103)">
              ${marks.map((m) => svg`<path d=${symbol(m.sym, m.x, m.y)} fill=${strata[m.key][1]} stroke="#2c3a40" stroke-opacity=".75"/>`)}
              <path d="M246 170l5 4 1 6-6 3-6-4 1-6z" fill="#f00" stroke="#c00"/>
              <path d="M228 159h39v37h-39z" fill="none" stroke="#f9aaa5" stroke-width="2"/>
            </g>
            <text class="title" x="339" y="35" text-anchor="middle">${name}</text>
            <text class="axis" x="339" y="522" text-anchor="middle">Ph/nC18[*].Sat-GC (Euc, [a/b])</text>
            <text class="axis" transform="translate(29 269) rotate(-90)" text-anchor="middle">Pr/nC17[*].Sat-GC (Euc, [a/b])</text>
            <text class="tick" x="70" y="501" text-anchor="middle">0.1</text><text class="tick" x="380" y="501" text-anchor="middle">1</text>
            <text class="tick" x="55" y="478" text-anchor="end">0.1</text><text class="tick" x="56" y="242" text-anchor="end">1</text>
            <text class="zone" x="252" y="438" text-anchor="middle">Mature</text>
            <text class="zone" x="475" y="417" text-anchor="middle">Early</text><text class="zone" x="477" y="435" text-anchor="middle">Mature</text>
          </svg>
        </div>
        <aside class="legend">
          <h3>Base Lstrat(Gp).Geol</h3>
          <ul>${Object.values(strata).map(([n, c]) => html`<li><i class="swatch" style=${styleMap({ background: c })}></i>${n}</li>`)}</ul>
          <h3>Quad.Well</h3>
          <ul class="wells">${[["^", "204"], ["v", "205"], [">", "206"]].map(([s, n]) => html`<li><svg width="22" height="20" viewBox="-8 -8 16 16"><path d=${symbol(s, 0, 0)} fill="#5c9a9c"/></svg>${n}</li>`)}</ul>
          <h3>Environment</h3>
          <ul class="zones">${env.map(([n, c]) => html`<li><i style=${styleMap({ background: c })}></i>${n}</li>`)}</ul>
        </aside>
        <div class="grip">${grip}</div>
      </div>`;
  }
}

/* ---------- floating partner card ---------- */

@customElement("partner-card")
class PartnerCard extends LitElement {
  static styles = [base, css`
    :host { display: flex; flex-direction: column; align-items: center; width: 199px; height: 538px; padding-top: 8px; border: 2px solid #43608f; border-radius: 38px; background: rgba(255, 255, 255, 0.86); }
    svg { overflow: visible; }
    .swirl { filter: drop-shadow(2px 4px 3px rgba(0, 0, 0, 0.45)); }
    .teams { margin: 10px 6px 0 0; }
    .moodle { margin-top: 14px; }
    .pdf { margin-top: 24px; }
    text { font-family: Roboto, "Open Sans", sans-serif; }
  `];
  render() {
    return html`
      <svg class="swirl" width="160" height="147" viewBox="0 0 160 147">
        <defs>
          <linearGradient id="outer" x1=".75" y1=".1" x2=".2" y2=".9"><stop offset="0" stop-color="#f9bb83"/><stop offset=".4" stop-color="#e4713f"/><stop offset="1" stop-color="#c9402a"/></linearGradient>
          <linearGradient id="inner" x1="0" x2="1"><stop offset="0" stop-color="#df6233"/><stop offset="1" stop-color="#f59555"/></linearGradient>
        </defs>
        <path d="M88 141C40 140 8 110 8 68C8 34 36 9 72 9C108 10 136 28 147 56L125 57C116 36 100 21 72 21C44 22 23 38 23 64C26 90 48 108 85 110Z" fill="url(#outer)" stroke="#fff" stroke-opacity=".4"/>
        <path d="M74 26C52 26 35 40 36 61C38 86 60 101 84 101C108 100 124 84 122 57L103 57C105 74 97 83 81 83C65 83 53 73 53 58C54 48 62 41 75 38Z" fill="url(#inner)" stroke="#fff" stroke-opacity=".4"/>
        <ellipse cx="78" cy="58" rx="14" ry="13" fill="#ee8c52"/>
      </svg>
      <svg class="teams" width="132" height="126" viewBox="0 0 132 128">
        <circle cx="73" cy="20" r="20" fill="#7b83eb"/><circle cx="115" cy="27" r="14" fill="#5059c9"/>
        <path d="M104 47h25q3 0 3 3v32q0 24-22 25-10 0-18-8z" fill="#5059c9"/>
        <path d="M40 47h64v46q-2 32-33 34-28-1-33-28z" fill="#7b83eb"/>
        <path d="M40 47h28q4 0 4 4v46q0 7-6 7H38z" fill="#4a50a8" opacity=".55"/>
        <rect x="1" y="29" width="69" height="69" rx="4" fill="#4b53bc"/>
        <text x="35" y="81" font-size="48" font-weight="500" fill="#fff" text-anchor="middle">T</text>
      </svg>
      <svg class="moodle" width="150" height="42" viewBox="0 0 150 42">
        <text x="8" y="38" font-size="41" font-weight="700" fill="#f08a24">moodle</text>
        <path d="M2 18L25 9l3 3-6 4v7q-8-3-13 1l-1-4-4 1v8H2z" fill="#222"/>
      </svg>
      <svg class="pdf" width="112" height="140" viewBox="0 0 112 140">
        <path d="M12 3H84L109 30V126Q109 137 98 137H14Q3 137 3 126V14Q3 3 12 3z" fill="#f6f4f4" stroke="#d23a35" stroke-width="5"/>
        <g fill="none" stroke="#d6262b" stroke-width="2.500"><path d="M53 29c-7 0-2 18 6 27 7 8 15 12 23 11 5-3-1-8-9-8-12 0-28 5-38 12-10 6-8 14-2 11 10-6 20-24 23-41 1-7 0-12-3-12z"/></g>
        <text x="55" y="116" font-size="27" font-weight="500" fill="#2a2a2a" text-anchor="middle">PDF</text>
      </svg>`;
  }
}

/* ---------- application shell ---------- */

@customElement("app-root")
class AppRoot extends LitElement {
  @property() project = "Day 3_Working with artefacts.pigi - p:IGI+";
  static styles = [base, css`
    :host { display: flex; flex-direction: column; min-height: 100vh; position: relative; overflow: hidden; padding: 3px 3px 0; background: linear-gradient(#8fabb1, #8ab9bb); font-family: "Open Sans", "Noto Sans", sans-serif; box-shadow: inset 0 3px #3c6d6b; }
    .title { display: flex; align-items: center; gap: 8px; height: 38px; padding: 0 20px 2px 7px; background: #fff; color: #a3a3a3; font-size: 15px; flex: none; }
    .title h1 { flex: 1; }
    .title button { width: 59px; display: grid; place-items: center; }
    nav { display: flex; align-items: center; gap: 27px; height: 44px; padding: 0 14px; background: #6b8799; border-top: 3px solid #7e929e; border-bottom: 3px solid #4b6678; color: #eaf1f5; font-size: 15px; flex: none; }
    .desk { display: flex; flex: 1; position: relative; margin-left: -3px; background: #9db0ba; border-top: 2px solid #b6c4cc; min-height: 960px; }
    .strip { width: 13px; flex: none; background: #92a9b6; display: flex; flex-direction: column; padding-top: 3px; }
    .strip button { height: 18px; background: #ccc; display: grid; place-items: center; }
    .stage { flex: 1; min-width: 0; padding: 2px 0 60px 8px; background: linear-gradient(#9bb0b8, #8dbabc); display: flex; }
    sample-window { flex: 1; min-width: 0; }
    project-tree { width: 399px; flex: none; }
    .map { position: absolute; left: 7px; top: 319px; width: 739px; bottom: 8px; }
    .scatter { position: absolute; left: 753px; top: 386px; right: 0; bottom: 4px; }
    .card { position: absolute; right: 9px; top: 9px; }
  `];
  render() {
    return html`
      <header class="title">
        <svg width="22" height="20" viewBox="0 0 22 20"><path d="M12 19C5 18 1 14 1 9 2 3 8 0 13 1q6 1 8 6h-4q-2-3-6-3-5 1-5 5 1 5 6 6z" fill="#b93a32"/><path d="M11 6q4-1 6 2-1 5-5 5-4-1-4-4z" fill="#d9785c"/></svg>
        <h1>${this.project}</h1>
        <button aria-label="Minimise"><svg width="12" height="12"><path d="M1 6h10" stroke="#888"/></svg></button>
        <button aria-label="Maximise"><svg width="12" height="12"><path d="M1.500 1.500h9v9h-9z" fill="none" stroke="#888"/></svg></button>
        <button aria-label="Close"><svg width="12" height="12"><path d="M1 1l10 10M11 1L1 11" stroke="#888"/></svg></button>
      </header>
      <nav>${["Project", "Edit", "Data", "Page", "Graph", "Map", "Help"].map((m) => html`<button>${m}</button>`)}</nav>
      <tool-ribbon></tool-ribbon>
      <main class="desk">
        <div class="stage"><sample-window></sample-window></div>
        <div class="strip"><button aria-label="Expand panel"><svg width="12" height="10"><path d="M1 0l4 5-4 5zM7 0l4 5-4 5z" fill="#222"/></svg></button></div>
        <project-tree></project-tree>
        <map-window class="map"></map-window>
        <scatter-window class="scatter"></scatter-window>
      </main>
      <partner-card class="card"></partner-card>`;
  }
}
